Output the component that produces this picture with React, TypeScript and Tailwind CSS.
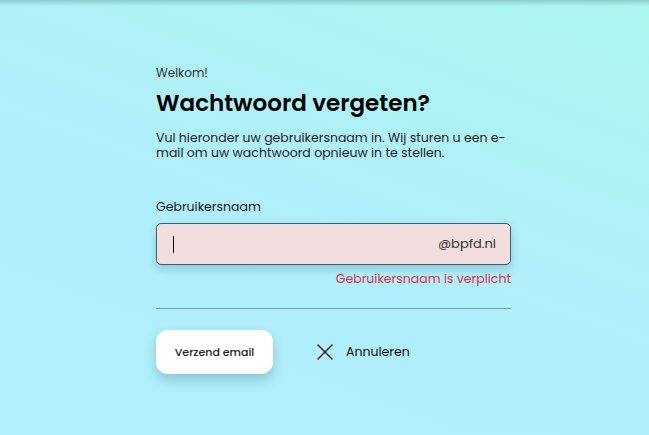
import { X } from 'lucide-react';

const font = { fontFamily: '"Poppins", "DejaVu Sans", sans-serif' };

export default function App() {
  return (
    <div
      className="relative min-h-[435px] w-full bg-[linear-gradient(200deg,#abf5ee_0%,#b1eefb_55%,#b1effd_100%)] text-[#1b1b1b]"
      style={font}
    >
      {/* header shadow */}
      <div className="h-[6px] w-full bg-[linear-gradient(to_bottom,rgba(40,90,100,0.25),rgba(40,90,100,0))]" />

      <div className="ml-[156px] w-[355px] pt-[60px]">
        <p className="text-[12px] leading-[14px] text-[#333]">Welkom!</p>

        <h1 className="mt-[9px] text-[23px] font-semibold leading-[28px] text-black">
          Wachtwoord vergeten?
        </h1>

        <p className="mt-[13px] text-[12.5px] leading-[15px] text-[#222]">
          Vul hieronder uw gebruikersnaam in. Wij sturen u een e-mail om uw wachtwoord opnieuw in te stellen.
        </p>

        <label className="mt-[39px] block text-[12.5px] leading-[16px] text-[#222]">
          Gebruikersnaam
        </label>

        <div className="mt-[8px] flex h-[42px] items-center rounded-[5px] border border-[#3f5f6c] bg-[#f2dede] pl-[16px] pr-[14px] shadow-[0_4px_8px_rgba(40,90,110,0.25)]">
          <span className="h-[17px] w-px bg-black" />
          <span className="ml-auto text-[13px] text-[#333]">@bpfd.nl</span>
        </div>

        <p className="mt-[6px] text-right text-[12.5px] leading-[15px] text-[#e2324a]">
          Gebruikersnaam is verplicht
        </p>

        <div className="mt-[22px] h-px w-full bg-[#7c9ca6]" />

        <div className="mt-[21px] flex items-center">
          <button className="h-[44px] w-[117px] rounded-[12px] bg-white text-[11px] font-medium text-[#222] shadow-[0_6px_12px_rgba(40,100,120,0.28)]">
            Verzend email
          </button>
          <button className="ml-[38px] flex items-center gap-[7px] text-[12.5px] text-[#111]">
            <X className="h-[28px] w-[28px]" strokeWidth={1.1} />
            Annuleren
          </button>
        </div>
      </div>
    </div>
  );
}
